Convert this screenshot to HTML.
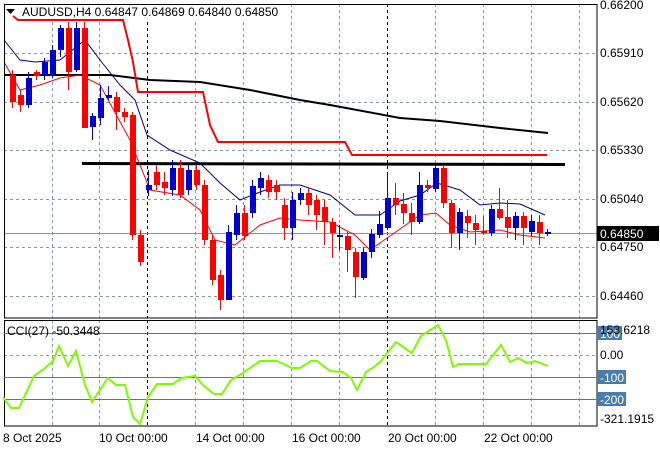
<!DOCTYPE html>
<html><head><meta charset="utf-8"><style>
html,body{margin:0;padding:0;background:#fff;width:660px;height:450px;overflow:hidden}
svg{display:block}
text{font-family:"Liberation Sans",sans-serif;font-size:12px;fill:#000}
</style></head><body>
<svg width="660" height="450" viewBox="0 0 660 450" xmlns="http://www.w3.org/2000/svg">
<rect width="660" height="450" fill="#fff"/>
<g stroke="#8a96a3" stroke-dasharray="3,3" stroke-width="1">
<line x1="4" y1="53.5" x2="597" y2="53.5"/><line x1="4" y1="102.5" x2="597" y2="102.5"/>
<line x1="4" y1="150.5" x2="597" y2="150.5"/><line x1="4" y1="199.5" x2="597" y2="199.5"/>
<line x1="4" y1="247.5" x2="597" y2="247.5"/><line x1="4" y1="296.5" x2="597" y2="296.5"/>
<line x1="52.5" y1="4" x2="52.5" y2="318"/><line x1="99.5" y1="4" x2="99.5" y2="318"/>
<line x1="195.5" y1="4" x2="195.5" y2="318"/><line x1="243.5" y1="4" x2="243.5" y2="318"/>
<line x1="291.5" y1="4" x2="291.5" y2="318"/><line x1="339.5" y1="4" x2="339.5" y2="318"/>
<line x1="435.5" y1="4" x2="435.5" y2="318"/><line x1="483.5" y1="4" x2="483.5" y2="318"/>
<line x1="531.5" y1="4" x2="531.5" y2="318"/><line x1="579.5" y1="4" x2="579.5" y2="318"/>
<line x1="52.5" y1="320" x2="52.5" y2="426"/><line x1="99.5" y1="320" x2="99.5" y2="426"/>
<line x1="195.5" y1="320" x2="195.5" y2="426"/><line x1="243.5" y1="320" x2="243.5" y2="426"/>
<line x1="291.5" y1="320" x2="291.5" y2="426"/><line x1="339.5" y1="320" x2="339.5" y2="426"/>
<line x1="435.5" y1="320" x2="435.5" y2="426"/><line x1="483.5" y1="320" x2="483.5" y2="426"/>
<line x1="531.5" y1="320" x2="531.5" y2="426"/><line x1="579.5" y1="320" x2="579.5" y2="426"/>
<line x1="4" y1="355.5" x2="597" y2="355.5"/>
</g>
<g stroke="#000" stroke-dasharray="3,3">
<line x1="147.5" y1="4" x2="147.5" y2="318"/><line x1="387.5" y1="4" x2="387.5" y2="318"/>
<line x1="147.5" y1="320" x2="147.5" y2="426"/><line x1="387.5" y1="320" x2="387.5" y2="426"/>
</g>
<line x1="4" y1="233.5" x2="597" y2="233.5" stroke="#8a96a3"/>
<polyline fill="none" stroke="#000" stroke-width="2" points="4,75 110,75 150,80 200,82 250,90 300,100 330,105 400,118 440,121 500,128 548,133"/>
<polyline fill="none" stroke="#f00" stroke-width="2" points="13,16 18,20 123,20 128,40 133,62 138,92 203,92 210,125 218,142 345,142 352,155 547,155"/>
<line x1="82" y1="163.5" x2="565" y2="164.5" stroke="#000" stroke-width="3"/>
<polyline fill="none" stroke="#000080" stroke-width="1" points="4,40 20,60 35,62 60,60 85,40 100,60 120,85 135,100 147,135 170,150 200,163 220,183 240,200 260,192 280,185 300,185 330,195 355,215 380,215 400,201 420,195 437,183 460,190 480,205 500,203 520,204 545,215"/>
<polyline fill="none" stroke="#f00" stroke-width="1" points="4,62 20,90 40,85 60,78 80,75 100,85 130,140 150,190 180,195 200,210 215,240 235,245 260,225 280,218 300,220 330,222 355,235 370,250 390,236 420,215 436,213 450,225 470,232 500,230 520,235 545,238"/>
<g id="c"></g>
<rect x="4.5" y="4.5" width="592.5" height="313.5" fill="none" stroke="#000"/>
<rect x="4.5" y="320.5" width="592.5" height="105.5" fill="none" stroke="#000"/>
<g stroke="#4a7ca8"><line x1="4" y1="333.5" x2="597" y2="333.5"/><line x1="4" y1="377.5" x2="597" y2="377.5"/><line x1="4" y1="399.5" x2="597" y2="399.5"/></g>
<polyline fill="none" stroke="#7cfc00" stroke-width="2" points="3,397 11,408 19,408 34,376 44,369 53,361 59,346 68,366 76,351 85,385 92,402 108,378 116,385 125,385 133,417 140,424 148,397 157,384 173,384 182,378 195,376 203,385 214,394 222,394 231,380 243,373 260,361 277,361 292,368 300,368 311,361 317,361 330,371 343,372 351,378 357,390 366,372 374,367 381,361 396,342 412,353 421,336 438,325 446,340 453,367 459,364 486,364 501,345 510,362 518,358 527,363 535,361 548,366"/>
<rect x="20" y="5" width="270" height="14" fill="#fff"/>
<text x="22" y="16">AUDUSD,H4  0.64847 0.64869 0.64840 0.64850</text>
<polygon points="6,9 15,9 10.5,14" fill="#000"/>
<text x="7" y="335">CCI(27) -50.3448</text>
<g>
<text x="600" y="9">0.66200</text><text x="600" y="57">0.65910</text><text x="600" y="106">0.65620</text>
<text x="600" y="154">0.65330</text><text x="600" y="203">0.65040</text><text x="600" y="251">0.64750</text>
<text x="600" y="300">0.64460</text>
<rect x="597" y="226" width="62" height="15" fill="#000"/><text x="600" y="238" style="fill:#fff">0.64850</text>
<rect x="597" y="326" width="25" height="14" fill="#4a7ca8"/><text x="600" y="338" style="fill:#fff">100</text>
<text x="600" y="334">153.6218</text>
<text x="600" y="359">0.00</text>
<rect x="597" y="370" width="29" height="14" fill="#4a7ca8"/><text x="600" y="382" style="fill:#fff">-100</text>
<rect x="597" y="392" width="29" height="14" fill="#4a7ca8"/><text x="600" y="404" style="fill:#fff">-200</text>
<text x="600" y="423">-321.1915</text>
</g>
<g>
<text x="3" y="442">8 Oct 2025</text><text x="99" y="442">10 Oct 00:00</text><text x="196" y="442">14 Oct 00:00</text>
<text x="292" y="442">16 Oct 00:00</text><text x="388" y="442">20 Oct 00:00</text><text x="484" y="442">22 Oct 00:00</text>
</g>
</svg>
<script>
var d=[[12,'r',75,102,70,108],[20,'r',95,105,90,112],[28,'b',78,105,72,108],[36,'r',72,76,70,80],[44,'b',62,75,58,80],[52,'b',50,75,45,78],[60,'b',28,50,25,57],[68,'r',28,72,22,90],[76,'b',28,70,22,72],[84,'r',28,128,22,128],[92,'b',116,127,113,140],[100,'b',98,118,85,125],[108,'b',95,98,86,100],[116,'r',97,112,92,130],[124,'r',112,117,108,122],[132,'r',115,235,112,240],[140,'r',235,262,230,266],[148,'b',185,190,170,196],[156,'r',172,185,165,190],[164,'r',182,188,172,195],[172,'b',168,190,160,196],[180,'r',168,195,160,198],[188,'b',170,190,165,195],[196,'r',170,185,165,190],[204,'r',185,240,180,245],[212,'r',240,280,235,285],[220,'r',275,300,270,310],[228,'b',232,300,225,300],[236,'b',213,235,205,240],[244,'r',213,236,205,240],[252,'b',186,213,180,218],[260,'b',178,188,172,195],[268,'r',180,192,175,198],[276,'r',185,192,180,200],[284,'r',205,228,198,240],[292,'b',200,228,192,240],[300,'b',193,200,188,205],[308,'r',193,205,188,215],[316,'r',200,215,195,230],[324,'r',207,222,200,245],[332,'r',222,233,218,258],[339,'b',235,237,225,250],[347,'r',236,250,232,272],[355,'r',252,277,248,298],[363,'b',252,278,247,280],[371,'b',234,252,229,258],[379,'b',224,235,211,238],[387,'b',198,228,172,230],[395,'r',198,205,183,215],[403,'r',204,213,193,224],[411,'r',213,222,203,235],[419,'b',185,222,172,224],[427,'r',185,188,180,192],[435,'b',168,189,165,192],[443,'r',168,203,165,208],[451,'r',203,233,200,248],[459,'b',212,233,208,250],[467,'r',216,223,210,238],[475,'r',223,230,215,245],[483,'r',231,233,216,235],[491,'b',209,233,205,236],[499,'r',209,218,188,220],[507,'r',217,228,200,238],[515,'b',216,228,212,240],[523,'r',216,228,212,245],[531,'b',221,232,215,236],[539,'r',222,233,215,245],[547,'b',232,234,229,236]];
var g=document.getElementById('c'),s='';
d.forEach(function(c){var col=c[1]=='r'?'#f00':'#00c';s+='<line x1="'+(c[0]+.5)+'" x2="'+(c[0]+.5)+'" y1="'+c[4]+'" y2="'+c[5]+'" stroke="'+col+'"/><rect x="'+(c[0]-2)+'" y="'+c[2]+'" width="6" height="'+Math.max(2,c[3]-c[2])+'" fill="'+col+'"/>';});
g.innerHTML=s;
</script>
</body></html>
